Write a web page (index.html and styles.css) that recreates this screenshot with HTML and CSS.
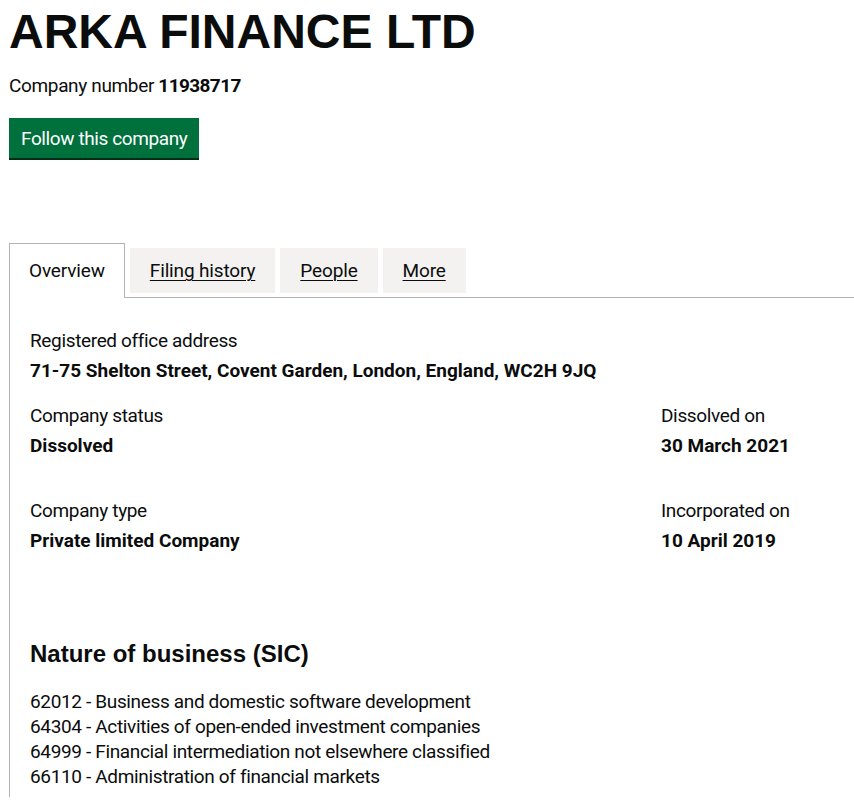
FILE: index.html
```html
<!DOCTYPE html>
<html lang="en">
<head>
<meta charset="utf-8">
<title>ARKA FINANCE LTD</title>
<link rel="stylesheet" href="styles.css">
</head>
<body>
<main class="page">
  <h1 class="title">ARKA FINANCE LTD</h1>
  <p class="company-number">Company number <strong>11938717</strong></p>
  <a class="button" href="#">Follow this company</a>

  <div class="tabs">
    <ul class="tab-list">
      <li class="tab tab--selected"><span class="tab-label">Overview</span></li>
      <li class="tab"><a class="tab-link" href="#">Filing history</a></li>
      <li class="tab"><a class="tab-link" href="#">People</a></li>
      <li class="tab"><a class="tab-link" href="#">More</a></li>
    </ul>
    <section class="panel">
      <dl class="item item--address">
        <dt>Registered office address</dt>
        <dd>71-75 Shelton Street, Covent Garden, London, England, WC2H 9JQ</dd>
      </dl>
      <div class="row">
        <dl class="item">
          <dt>Company status</dt>
          <dd>Dissolved</dd>
        </dl>
        <dl class="item">
          <dt>Dissolved on</dt>
          <dd>30 March 2021</dd>
        </dl>
      </div>
      <div class="row">
        <dl class="item">
          <dt>Company type</dt>
          <dd>Private limited Company</dd>
        </dl>
        <dl class="item">
          <dt>Incorporated on</dt>
          <dd>10 April 2019</dd>
        </dl>
      </div>
      <h2 class="heading">Nature of business (SIC)</h2>
      <ul class="sic-list">
        <li>62012 - Business and domestic software development</li>
        <li>64304 - Activities of open-ended investment companies</li>
        <li>64999 - Financial intermediation not elsewhere classified</li>
        <li>66110 - Administration of financial markets</li>
      </ul>
    </section>
  </div>
</main>
</body>
</html>
```

FILE: styles.css
```css
* { box-sizing: border-box; }

html, body {
  margin: 0;
  padding: 0;
  background: #ffffff;
  overflow-x: hidden;
}

body {
  font-family: Roboto, "Liberation Sans", Arial, sans-serif;
  color: #0b0c0c;
  font-size: 19px;
  line-height: 25px;
  letter-spacing: -0.35px;
}

.page {
  padding: 8px 0 0 9px;
}

.title {
  margin: 0 0 17px;
  font-family: "Liberation Sans", Arial, sans-serif;
  font-weight: 700;
  font-size: 48px;
  line-height: 48px;
  letter-spacing: 0;
}

.company-number {
  margin: 0 0 20px;
}

.company-number strong {
  font-weight: 700;
  letter-spacing: -0.6px;
}

.button {
  display: inline-block;
  background: #00703c;
  color: #ffffff;
  text-decoration: none;
  border: 2px solid transparent;
  padding: 8px 10px 7px;
  line-height: 21px;
  letter-spacing: -0.4px;
  box-shadow: 0 2px 0 #002d18;
}

.tabs {
  margin-top: 85px;
}

.tab-list {
  list-style: none;
  margin: 0;
  padding: 0;
  display: flex;
  align-items: flex-start;
  border-bottom: 1px solid #b1b4b6;
  letter-spacing: -0.15px;
}

.tab {
  margin: 5px 5px 0 0;
  padding: 10px 20px;
  background: #f3f2f1;
}

.tab--selected {
  margin: 0 5px -1px 0;
  padding: 14px 19px 15px;
  border: 1px solid #b1b4b6;
  border-bottom: 0;
  background: #ffffff;
}

.tab-link {
  color: #0b0c0c;
  text-decoration: underline;
  text-decoration-thickness: 1px;
  text-underline-offset: 3px;
}

.panel {
  border-left: 1px solid #b1b4b6;
  padding: 30px 20px 8px;
}

.item {
  margin: 0;
}

.item dt {
  margin: 0 0 5px;
}

.item dd {
  margin: 0;
  font-weight: 700;
  letter-spacing: 0;
}

.item--address {
  margin-bottom: 20px;
}

.row {
  display: grid;
  grid-template-columns: 631px 1fr;
  margin-bottom: 40px;
}

.heading {
  margin: 86px 0 20px;
  font-family: "Liberation Sans", Arial, sans-serif;
  font-weight: 700;
  font-size: 24px;
  line-height: 30px;
  letter-spacing: 0;
}

.sic-list {
  list-style: none;
  margin: 0;
  padding: 0;
}
```
